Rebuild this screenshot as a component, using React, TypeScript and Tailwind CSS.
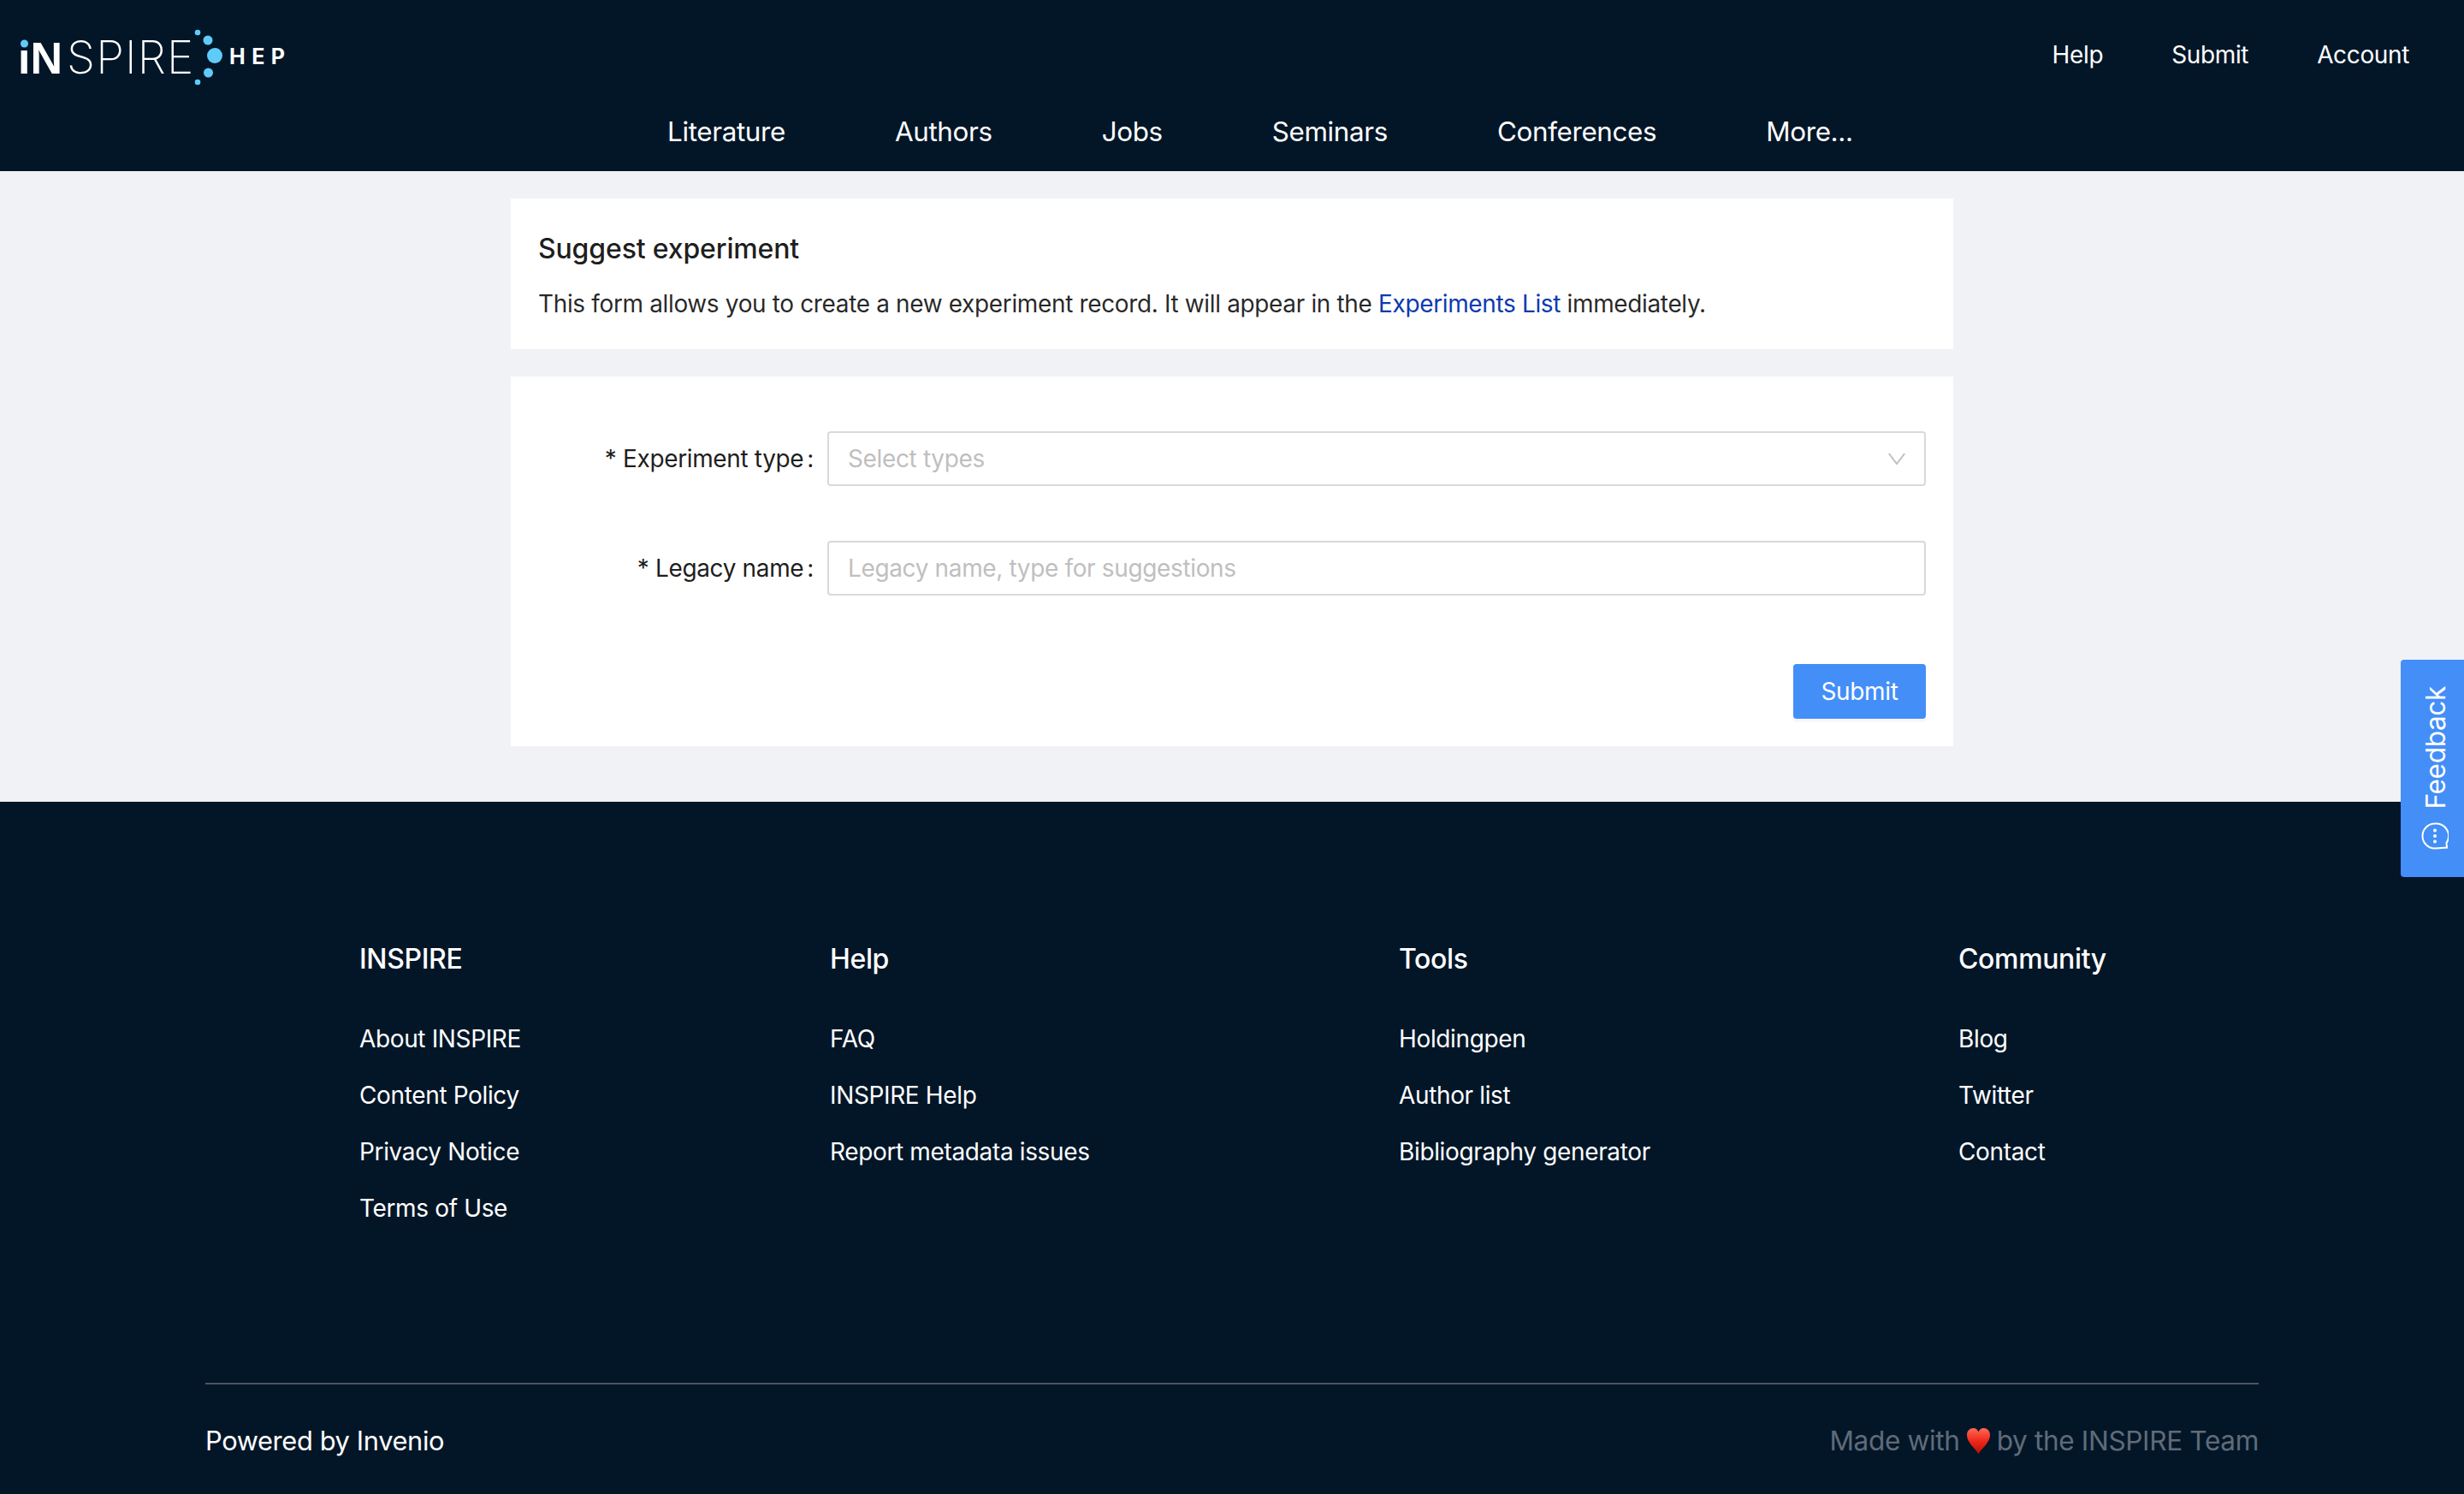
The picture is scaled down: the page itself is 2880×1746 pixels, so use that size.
import React from "react";

const navLinks = ["Literature", "Authors", "Jobs", "Seminars", "Conferences", "More..."];
const topLinks = ["Help", "Submit", "Account"];

const footerColumns = [
  { title: "INSPIRE", links: ["About INSPIRE", "Content Policy", "Privacy Notice", "Terms of Use"] },
  { title: "Help", links: ["FAQ", "INSPIRE Help", "Report metadata issues"] },
  { title: "Tools", links: ["Holdingpen", "Author list", "Bibliography generator"] },
  { title: "Community", links: ["Blog", "Twitter", "Contact"] },
];

function Logo() {
  return (
    <div className="relative h-[200px] w-[340px] shrink-0 text-white">
      <div className="absolute left-[21px] top-[37px] flex items-baseline font-['Liberation_Sans',sans-serif] text-[52px] leading-[60px] tracking-[0px]">
        <span className="font-bold">iN</span>
        <span className="ml-[5px] font-['Inter',sans-serif] text-[53px] font-[200] tracking-[1.2px]">SPIRE</span>
      </div>
      <svg className="absolute left-0 top-0" width="340" height="120" viewBox="0 0 340 120">
        <rect x="20" y="44" width="16" height="12" fill="#031628" />
        <circle cx="28.5" cy="51" r="4.5" fill="#5fcbfb" />
        <circle cx="231" cy="38" r="3.3" fill="#5fcbfb" />
        <circle cx="243" cy="47" r="5.5" fill="#5fcbfb" />
        <circle cx="251" cy="65" r="9" fill="#5fcbfb" />
        <circle cx="243.5" cy="85" r="5.5" fill="#5fcbfb" />
        <circle cx="231" cy="96" r="3.3" fill="#5fcbfb" />
      </svg>
      <span className="absolute left-[268px] top-[50px] text-[25px] font-bold leading-[32px] tracking-[7.5px]">HEP</span>
    </div>
  );
}

function Header() {
  return (
    <header className="h-[200px] bg-[#031628] text-white">
      <div className="relative h-full">
        <Logo />
        <nav className="absolute right-[64px] top-[44px] flex gap-[80px] text-[28px] leading-[40px]">
          {topLinks.map((link) => (
            <a key={link}>{link}</a>
          ))}
        </nav>
        <nav className="absolute left-[780px] top-[132px] flex gap-[128px] text-[31.4px] leading-[44px]">
          {navLinks.map((link) => (
            <a key={link}>{link}</a>
          ))}
        </nav>
      </div>
    </header>
  );
}

function FormRow({ label, children }: { label: string; children: React.ReactNode }) {
  return (
    <div className="flex h-[64px] items-center">
      <label className="flex w-[338px] shrink-0 justify-end pr-[16px] text-[28px] text-black/90">
        <span>* {label}</span>
        <span className="ml-[4px]">:</span>
      </label>
      {children}
    </div>
  );
}

function SuggestForm() {
  return (
    <main className="bg-[#f0f2f5] pb-[65px] pt-[32px]">
      <div className="mx-auto flex w-[1686px] flex-col gap-[32px]">
        <section className="h-[176px] bg-white px-[32px] pt-[37px]">
          <h1 className="text-[32px] font-[550] leading-[44px] tracking-[-0.15px] text-black/90">Suggest experiment</h1>
          <p className="mt-[20px] text-[28px] leading-[44px] text-black/85">
            This form allows you to create a new experiment record. It will appear in the{" "}
            <a className="text-[#0b3ab0]">Experiments List</a> immediately.
          </p>
        </section>
        <section className="flex flex-col gap-[64px] bg-white px-[32px] pb-[32px] pt-[64px]">
          <FormRow label="Experiment type">
            <div className="flex h-[64px] flex-1 items-center justify-between rounded-[4px] border-2 border-[#d9d9d9] bg-white pl-[22px] pr-[22px] text-[28px] text-[#bfbfbf]">
              <span>Select types</span>
              <svg width="20" height="14" viewBox="0 0 20 14" fill="none" stroke="#bfbfbf" strokeWidth="2">
                <path d="M0.8 1 L10 13 L19.2 1" />
              </svg>
            </div>
          </FormRow>
          <FormRow label="Legacy name">
            <input
              className="h-[64px] flex-1 rounded-[4px] border-2 border-[#d9d9d9] bg-white px-[22px] text-[28px] placeholder:text-[#bfbfbf]"
              placeholder="Legacy name, type for suggestions"
            />
          </FormRow>
          <button className="mt-[16px] h-[64px] w-[155px] self-end rounded-[4px] bg-[#448ef7] text-[28px] text-white shadow-[0_4px_0_rgba(0,0,0,0.03)]">
            Submit
          </button>
        </section>
      </div>
    </main>
  );
}

function Footer() {
  return (
    <footer className="h-[809px] bg-[#031628] px-[240px] pt-[160px] text-white">
      <div className="grid h-[519px] grid-cols-[550px_665px_654px_auto] pl-[180px]">
        {footerColumns.map((col) => (
          <div key={col.title}>
            <h3 className="text-[32px] font-medium leading-[48px]">{col.title}</h3>
            <ul className="mt-[49px] flex flex-col gap-[26px] text-[28px] leading-[40px]">
              {col.links.map((link) => (
                <li key={link}>{link}</li>
              ))}
            </ul>
          </div>
        ))}
      </div>
      <div className="flex items-center justify-between border-t-2 border-[#4a5563] pt-[44px] text-[30.8px] leading-[44px]">
        <span>Powered by Invenio</span>
        <span className="flex items-center gap-[8px] text-[31.6px] text-[#5f6b78]">
          Made with
          <svg width="27" height="30" viewBox="0 0 27 30">
            <defs>
              <linearGradient id="heartFill" x1="0" y1="0" x2="0" y2="1">
                <stop offset="0" stopColor="#ff6a55" />
                <stop offset="0.5" stopColor="#f0281a" />
                <stop offset="1" stopColor="#b80f08" />
              </linearGradient>
            </defs>
            <path d="M13.5 30 C10 24 0 17 0 8 C0 3 3.5 0 7.5 0 C10.5 0 12.5 2 13.5 4.5 C14.5 2 16.5 0 19.5 0 C23.5 0 27 3 27 8 C27 17 17 24 13.5 30 Z" fill="url(#heartFill)" />
          </svg>
          by the INSPIRE Team
        </span>
      </div>
    </footer>
  );
}

function FeedbackTab() {
  return (
    <div className="absolute right-0 top-[771px] flex h-[254px] w-[74px] flex-col items-center justify-end gap-[16px] rounded-l-[4px] bg-[#448ef7] pb-[32px] pl-[6px] text-white">
      <span className="ml-[2px] rotate-180 text-[31.6px] leading-[44px] [writing-mode:vertical-rl]">Feedback</span>
      <svg width="32" height="32" viewBox="0 0 32 32" fill="none" stroke="white" strokeWidth="2">
        <path d="M16 1.5 A14.5 14.5 0 1 0 16 30.5 L30 29.5 L29.5 24 A14.5 14.5 0 0 0 16 1.5 Z" />
        <circle cx="16" cy="9.5" r="1" fill="white" />
        <circle cx="16" cy="16" r="1" fill="white" />
        <circle cx="16" cy="22.5" r="1" fill="white" />
      </svg>
    </div>
  );
}

export default function App() {
  return (
    <div className="relative min-h-[1746px] font-['Inter',sans-serif] tracking-[-0.36px]">
      <Header />
      <SuggestForm />
      <Footer />
      <FeedbackTab />
    </div>
  );
}
